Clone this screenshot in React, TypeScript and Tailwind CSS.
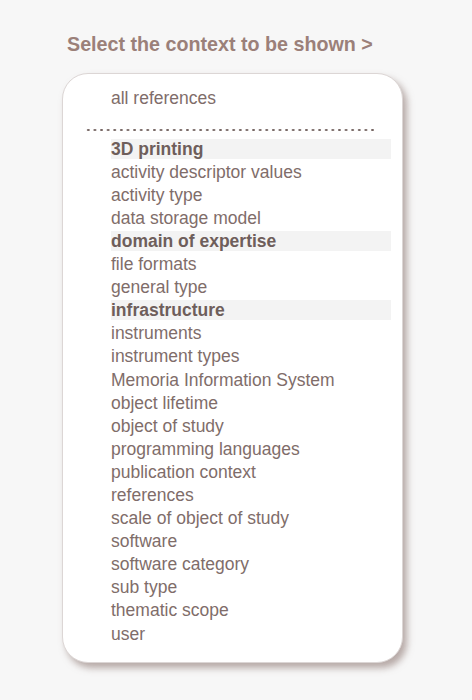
const contexts = [
  { name: "3D printing", group: true },
  { name: "activity descriptor values" },
  { name: "activity type" },
  { name: "data storage model" },
  { name: "domain of expertise", group: true },
  { name: "file formats" },
  { name: "general type" },
  { name: "infrastructure", group: true },
  { name: "instruments" },
  { name: "instrument types" },
  { name: "Memoria Information System" },
  { name: "object lifetime" },
  { name: "object of study" },
  { name: "programming languages" },
  { name: "publication context" },
  { name: "references" },
  { name: "scale of object of study" },
  { name: "software" },
  { name: "software category" },
  { name: "sub type" },
  { name: "thematic scope" },
  { name: "user" },
];

export default function App() {
  return (
    <div className="min-h-[700px] w-[472px] bg-[#f7f7f7] font-['Liberation_Sans',Arial,sans-serif] pt-[34px]">
      {/* Heading */}
      <h2 className="ml-[67px] text-[19.7px] leading-[20px] font-bold text-[#9b8079]">
        Select the context to be shown &gt;
      </h2>

      {/* Context list */}
      <div className="ml-[62px] mt-[19px] w-[341px] h-[590px] rounded-[26px] border border-[#dcd6d5] bg-white shadow-[4px_5px_7px_rgba(130,105,100,0.55)] pl-[21px] pr-[11px] pt-[12px] text-[17.5px] text-[#7f6d6a]">
        <div className="py-[1.5px] pl-[27px] leading-[20.1px]">all references</div>

        <div className="mt-[20px] ml-[1px] h-[2px] w-[292px] bg-[radial-gradient(circle,#766663_1px,transparent_1.3px)] bg-[length:6.62px_2px]" />

        <ul className="mt-[6px]">
          {contexts.map((c) => (
            <li
              key={c.name}
              className={`py-[1.5px] pl-[27px] leading-[20.1px] whitespace-nowrap ${
                c.group ? "font-bold text-[#6e5e5b] bg-[#f3f3f3] bg-clip-content" : ""
              }`}
            >
              {c.name}
            </li>
          ))}
        </ul>
      </div>
    </div>
  );
}
